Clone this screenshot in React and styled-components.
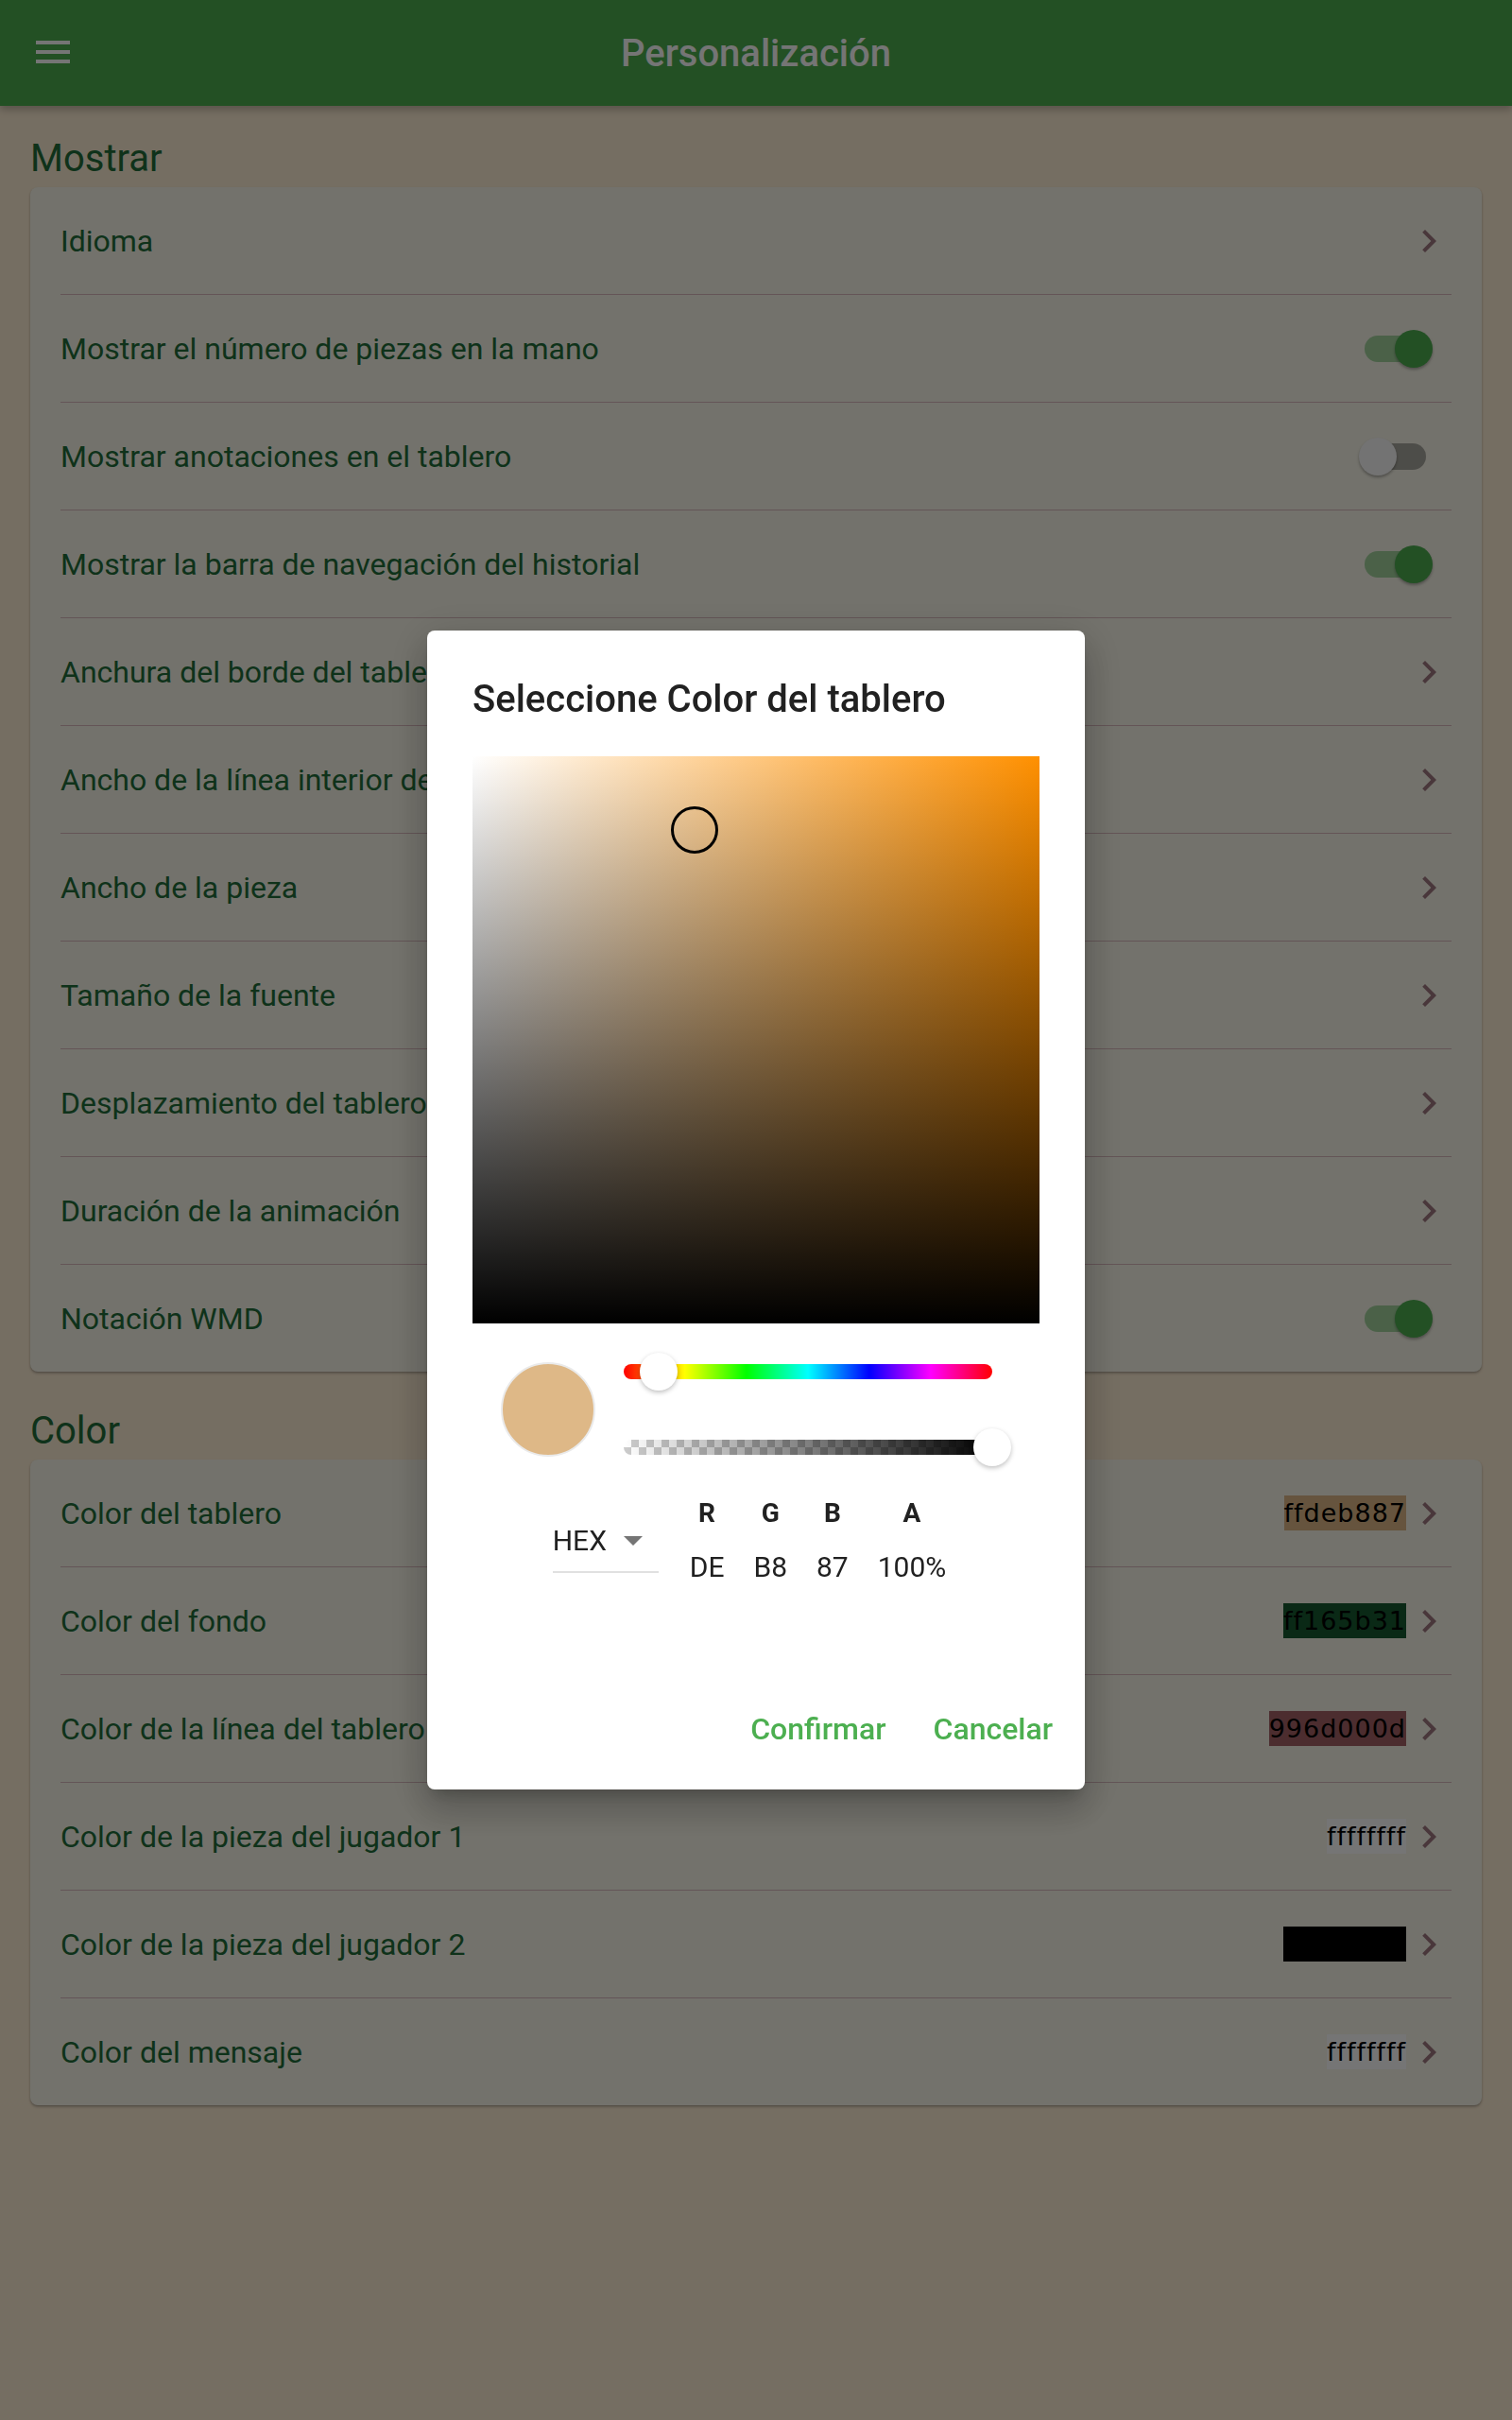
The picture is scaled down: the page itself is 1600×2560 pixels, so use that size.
import styled, { createGlobalStyle } from "styled-components";

const GlobalStyle = createGlobalStyle`
  body {
    margin: 0;
    font-family: Roboto, "Noto Sans", sans-serif;
  }
`;

const displayRows = [
  { label: "Idioma", kind: "link" },
  { label: "Mostrar el número de piezas en la mano", kind: "switch", on: true },
  { label: "Mostrar anotaciones en el tablero", kind: "switch", on: false },
  { label: "Mostrar la barra de navegación del historial", kind: "switch", on: true },
  { label: "Anchura del borde del tablero", kind: "link" },
  { label: "Ancho de la línea interior del tablero", kind: "link" },
  { label: "Ancho de la pieza", kind: "link" },
  { label: "Tamaño de la fuente", kind: "link" },
  { label: "Desplazamiento del tablero", kind: "link" },
  { label: "Duración de la animación", kind: "link" },
  { label: "Notación WMD", kind: "switch", on: true },
];

const colorRows = [
  { label: "Color del tablero", value: "ffdeb887", bg: "#deb887" },
  { label: "Color del fondo", value: "ff165b31", bg: "#165b31" },
  { label: "Color de la línea del tablero", value: "996d000d", bg: "rgba(109,0,13,0.6)" },
  { label: "Color de la pieza del jugador 1", value: "ffffffff", bg: "#ffffff" },
  { label: "Color de la pieza del jugador 2", value: "ff000000", bg: "#000000" },
  { label: "Color del mensaje", value: "ffffffff", bg: "#ffffff" },
];

const channels = [
  { name: "R", value: "DE" },
  { name: "G", value: "B8" },
  { name: "B", value: "87" },
  { name: "A", value: "100%" },
];

const MenuIcon = () => (
  <svg width="48" height="48" viewBox="0 0 24 24" fill="#fff">
    <path d="M3 18h18v-2H3v2zm0-5h18v-2H3v2zm0-7v2h18V6H3z" />
  </svg>
);

const ChevronIcon = () => (
  <svg width="48" height="48" viewBox="0 0 24 24" fill="#a07880">
    <path d="M10 6L8.59 7.41 13.17 12l-4.58 4.59L10 18l6-6z" />
  </svg>
);

const DropIcon = () => (
  <svg width="48" height="48" viewBox="0 0 24 24" fill="#757575">
    <path d="M7 10l5 5 5-5z" />
  </svg>
);

const Toggle = ({ on }) => (
  <SwitchTrack on={on}>
    <SwitchThumb on={on} />
  </SwitchTrack>
);

const SettingsRow = ({ row }) => (
  <Row>
    <RowLabel>{row.label}</RowLabel>
    {row.kind === "switch" ? (
      <Toggle on={row.on} />
    ) : (
      <Trailing>
        {row.value && <ValueChip bg={row.bg}>{row.value}</ValueChip>}
        <ChevronIcon />
      </Trailing>
    )}
  </Row>
);

const App = () => {
  return (
    <Page>
      <GlobalStyle />
      <AppBar>
        <MenuButton>
          <MenuIcon />
        </MenuButton>
        <AppTitle>Personalización</AppTitle>
        <span />
      </AppBar>

      <Content>
        <SectionTitle>Mostrar</SectionTitle>
        <Card>
          {displayRows.map((row) => (
            <SettingsRow key={row.label} row={row} />
          ))}
        </Card>

        <SectionTitle spaced>Color</SectionTitle>
        <Card>
          {colorRows.map((row) => (
            <SettingsRow key={row.label} row={row} />
          ))}
        </Card>
      </Content>

      <Barrier>
        <Dialog>
          <DialogBody>
            <DialogTitle>Seleccione Color del tablero</DialogTitle>
            <ColorArea>
              <Marker />
            </ColorArea>

            <PickerRow>
              <Swatch />
              <Sliders>
                <SliderRow>
                  <HueTrack>
                    <Thumb style={{ left: 17 }} />
                  </HueTrack>
                </SliderRow>
                <SliderRow>
                  <AlphaTrack>
                    <Thumb style={{ left: 370 }} />
                  </AlphaTrack>
                </SliderRow>
              </Sliders>
            </PickerRow>

            <ValuesRow>
              <FormatSelect>
                <FormatText>HEX</FormatText>
                <DropIcon />
              </FormatSelect>
              {channels.map((c) => (
                <Channel key={c.name}>
                  <ChannelName>{c.name}</ChannelName>
                  <ChannelValue>{c.value}</ChannelValue>
                </Channel>
              ))}
            </ValuesRow>
          </DialogBody>

          <Actions>
            <TextButton>Confirmar</TextButton>
            <TextButton>Cancelar</TextButton>
          </Actions>
        </Dialog>
      </Barrier>
    </Page>
  );
};

const Page = styled.div`
  min-height: 2560px;
  background: #ffefd5;
  position: relative;
`;

const AppBar = styled.header`
  height: 112px;
  background: #4caf50;
  display: grid;
  grid-template-columns: 1fr auto 1fr;
  align-items: center;
  padding: 0 32px;
  box-sizing: border-box;
  box-shadow: 0 4px 8px rgba(0, 0, 0, 0.25);
  position: relative;
  z-index: 1;
`;

const MenuButton = styled.div`
  width: 48px;
  height: 48px;
  display: flex;
  margin-top: -2px;
`;

const AppTitle = styled.h1`
  margin: 0;
  font-size: 40px;
  font-weight: 500;
  color: #fff;
`;

const Content = styled.main`
  padding: 32px 32px 0;
`;

const SectionTitle = styled.h2`
  margin: ${(p) => (p.spaced ? "39px" : "0")} 0 7px;
  font-size: 40px;
  line-height: 47px;
  font-weight: 400;
  color: #216e3a;
`;

const Card = styled.section`
  background: #faf8eb;
  border-radius: 8px;
  padding: 0 32px;
  box-shadow: 0 2px 3px rgba(0, 0, 0, 0.2), 0 1px 2px rgba(0, 0, 0, 0.14);
`;

const Row = styled.div`
  height: 113px;
  display: flex;
  align-items: center;
  justify-content: space-between;
  &:not(:last-child) {
    border-bottom: 1px solid #d9b9bd;
  }
`;

const RowLabel = styled.span`
  font-size: 32px;
  color: #216e3a;
`;

const Trailing = styled.div`
  display: flex;
  align-items: center;
`;

const ValueChip = styled.span`
  background: ${(p) => p.bg};
  color: #000;
  font-family: "DejaVu Sans", sans-serif;
  font-size: 27px;
  letter-spacing: 1px;
  line-height: 37px;
  height: 37px;
`;

const SwitchTrack = styled.div`
  position: relative;
  width: 65px;
  height: 28px;
  border-radius: 14px;
  margin-right: 27px;
  background: ${(p) => (p.on ? "rgba(76, 175, 80, 0.5)" : "rgba(0, 0, 0, 0.32)")};
`;

const SwitchThumb = styled.div`
  position: absolute;
  top: -6px;
  left: ${(p) => (p.on ? "32px" : "-6px")};
  width: 40px;
  height: 40px;
  border-radius: 50%;
  background: ${(p) => (p.on ? "#4caf50" : "#fafafa")};
  box-shadow: 0 2px 3px rgba(0, 0, 0, 0.3);
`;

const Barrier = styled.div`
  position: fixed;
  inset: 0;
  background: rgba(0, 0, 0, 0.54);
  display: flex;
  align-items: center;
  justify-content: center;
  z-index: 2;
`;

const Dialog = styled.div`
  width: 696px;
  background: #fff;
  border-radius: 8px;
  box-shadow: 0 22px 35px 3px rgba(0, 0, 0, 0.14), 0 9px 46px 8px rgba(0, 0, 0, 0.12),
    0 11px 15px -7px rgba(0, 0, 0, 0.2);
`;

const DialogBody = styled.div`
  padding: 49px 48px 0;
`;

const DialogTitle = styled.h3`
  margin: 0;
  font-size: 40px;
  line-height: 47px;
  font-weight: 500;
  color: #212121;
`;

const ColorArea = styled.div`
  position: relative;
  margin-top: 37px;
  width: 600px;
  height: 600px;
  background: linear-gradient(to bottom, rgba(0, 0, 0, 0), #000),
    linear-gradient(to right, #fff, #ff9000);
`;

const Marker = styled.div`
  position: absolute;
  left: 210px;
  top: 53px;
  width: 44px;
  height: 44px;
  border: 3px solid #000;
  border-radius: 50%;
`;

const PickerRow = styled.div`
  margin-top: 11px;
  height: 160px;
  display: flex;
  align-items: center;
  padding-left: 30px;
  gap: 30px;
`;

const Swatch = styled.div`
  width: 96px;
  height: 96px;
  border-radius: 50%;
  background: #deb887;
  border: 2px solid #eaeaea;
`;

const Sliders = styled.div`
  width: 390px;
  display: flex;
  flex-direction: column;
`;

const SliderRow = styled.div`
  height: 80px;
  display: flex;
  align-items: center;
`;

const HueTrack = styled.div`
  position: relative;
  width: 100%;
  height: 16px;
  border-radius: 8px;
  background: linear-gradient(
    to right,
    #f00,
    #ff0 16.6%,
    #0f0 33.3%,
    #0ff 50%,
    #00f 66.6%,
    #f0f 83.3%,
    #f00
  );
`;

const AlphaTrack = styled.div`
  position: relative;
  width: 100%;
  height: 16px;
  border-radius: 8px;
  background: linear-gradient(to right, rgba(0, 0, 0, 0), #000),
    repeating-conic-gradient(#ccc 0% 25%, #fff 0% 50%) 0 0 / 16px 16px;
`;

const Thumb = styled.div`
  position: absolute;
  top: -12px;
  width: 40px;
  height: 40px;
  border-radius: 50%;
  background: #fff;
  box-shadow: 0 2px 5px rgba(0, 0, 0, 0.25);
`;

const ValuesRow = styled.div`
  margin-top: 13px;
  display: flex;
  justify-content: center;
  align-items: flex-start;
  gap: 3px;
`;

const FormatSelect = styled.div`
  display: flex;
  align-items: center;
  width: 112px;
  margin: 21px 16px 0 0;
  padding-bottom: 9px;
  border-bottom: 2px solid #e0e0e0;
`;

const FormatText = styled.span`
  font-size: 30px;
  line-height: 35px;
  color: #212121;
  margin-right: 4px;
`;

const Channel = styled.div`
  display: flex;
  flex-direction: column;
  align-items: center;
  padding: 0 14px;
`;

const ChannelName = styled.span`
  font-size: 28px;
  line-height: 33px;
  font-weight: 700;
  color: #212121;
`;

const ChannelValue = styled.span`
  margin-top: 23px;
  font-size: 30px;
  line-height: 35px;
  color: #212121;
`;

const Actions = styled.div`
  margin-top: 118px;
  display: flex;
  justify-content: flex-end;
  gap: 18px;
  padding: 0 18px 28px;
`;

const TextButton = styled.button`
  height: 72px;
  padding: 0 16px;
  border: 0;
  background: none;
  font-family: Roboto, sans-serif;
  font-size: 32px;
  font-weight: 500;
  color: #4caf50;
`;

export default App;
